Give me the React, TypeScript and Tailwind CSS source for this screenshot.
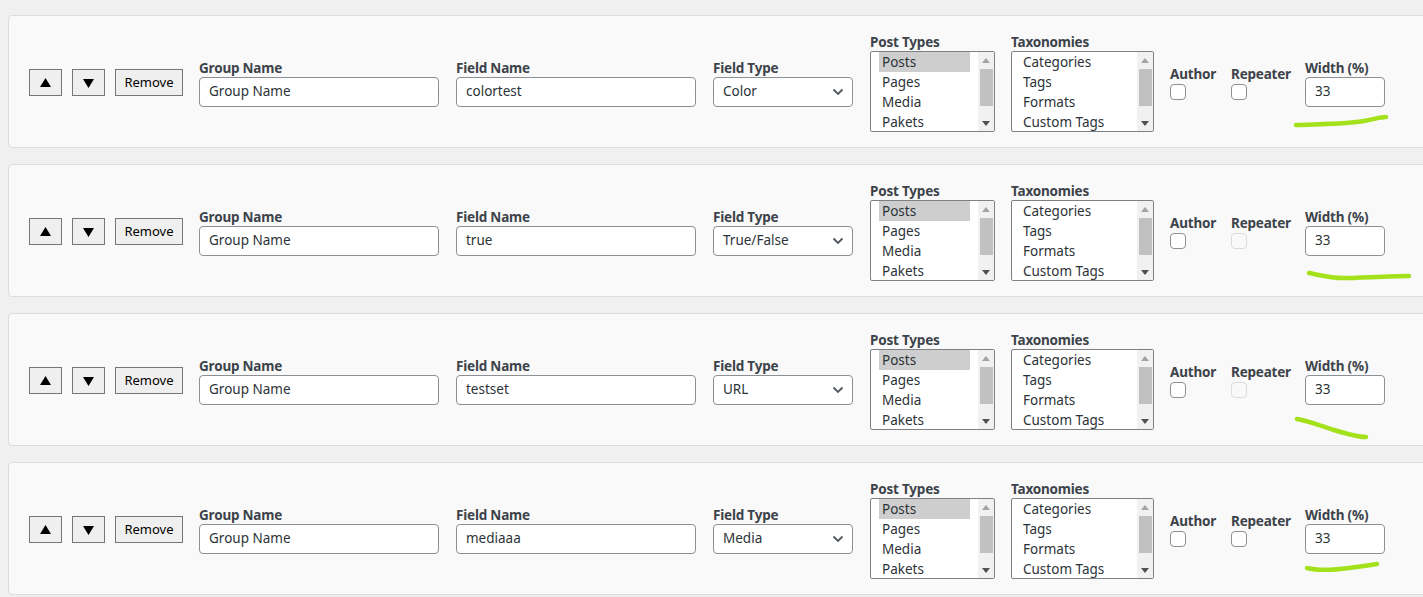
import React from 'react';

type Row = {
  fieldName: string;
  fieldType: string;
  repeaterDisabled: boolean;
  mark: string;
};

const rows: Row[] = [
  {
    fieldName: 'colortest',
    fieldType: 'Color',
    repeaterDisabled: false,
    mark: 'M1287 109 C 1315 108, 1340 108, 1355 105 S 1372 101 1377 101',
  },
  {
    fieldName: 'true',
    fieldType: 'True/False',
    repeaterDisabled: true,
    mark: 'M1300 108 C 1315 111, 1322 113, 1335 113 S 1380 111 1400 111',
  },
  {
    fieldName: 'testset',
    fieldType: 'URL',
    repeaterDisabled: true,
    mark: 'M1288 105 C 1300 107, 1312 112, 1325 116 S 1350 123 1357 123',
  },
  {
    fieldName: 'mediaaa',
    fieldType: 'Media',
    repeaterDisabled: false,
    mark: 'M1298 105 C 1310 108, 1325 107, 1340 105 S 1362 102 1368 101',
  },
];

const font = { fontFamily: '"Noto Sans", "Open Sans", Arial, sans-serif' };

function FieldLabel({ children }: { children: React.ReactNode }) {
  return (
    <div className="text-[13.5px] leading-[18px] font-bold tracking-[-0.2px] text-[#3c434a] whitespace-nowrap">
      {children}
    </div>
  );
}

function TextInput({ value, width }: { value: string; width: string }) {
  return (
    <div
      className={`${width} h-[30px] flex items-center px-[9px] bg-white border border-[#8c8f94] rounded-[4px] text-[13.5px] text-[#2c3338]`}
    >
      {value}
    </div>
  );
}

function ListBox({
  items,
  width,
  selected,
}: {
  items: string[];
  width: string;
  selected?: number;
}) {
  return (
    <div
      className={`${width} h-[81px] flex bg-white border border-[#7e8084] rounded-[2px] overflow-hidden`}
    >
      <div className="flex-1 pl-[8px] pr-[8px]">
        {items.map((item, i) => (
          <div
            key={item}
            className={`h-[20px] leading-[20px] pl-[3px] text-[13.5px] text-[#2c3338] whitespace-nowrap ${
              i === selected ? 'bg-[#cecece]' : ''
            }`}
          >
            {item}
          </div>
        ))}
      </div>
      <div className="w-[16px] bg-[#f1f1f1] flex flex-col items-center">
        <div className="h-[16px] flex items-center justify-center">
          <svg width="8" height="5" viewBox="0 0 8 5">
            <path d="M0 5 L4 0 L8 5 Z" fill="#a3a3a3" />
          </svg>
        </div>
        <div className="w-[13px] h-[37px] mt-[1px] bg-[#c1c1c1]" />
        <div className="flex-1" />
        <div className="h-[16px] flex items-center justify-center">
          <svg width="8" height="5" viewBox="0 0 8 5">
            <path d="M0 0 L4 5 L8 0 Z" fill="#505050" />
          </svg>
        </div>
      </div>
    </div>
  );
}

function CheckBox({ disabled }: { disabled?: boolean }) {
  return (
    <div
      className={`w-[16px] h-[16px] rounded-[4px] border ${
        disabled ? 'border-[#dcdcde] bg-[#f9f9f9]' : 'border-[#8c8f94] bg-white'
      }`}
    />
  );
}

function SmallButton({
  children,
  width,
}: {
  children: React.ReactNode;
  width: string;
}) {
  return (
    <div
      className={`${width} h-[27px] flex items-center justify-center bg-[#efefef] border border-[#767676] text-[13px] text-black`}
    >
      {children}
    </div>
  );
}

function Arrow({ down }: { down?: boolean }) {
  return (
    <svg width="11" height="10" viewBox="0 0 11 10">
      <path d={down ? 'M0 1 L11 1 L5.5 10 Z' : 'M0 9 L11 9 L5.5 0 Z'} fill="#000" />
    </svg>
  );
}

function FieldRow({ row }: { row: Row }) {
  return (
    <div className="relative w-[1440px] h-[133px] flex items-center pl-[20px] pt-[2px] bg-[#f9f9f9] border border-[#dcdcde] rounded-[4px]">
      <SmallButton width="w-[33px]">
        <Arrow />
      </SmallButton>
      <div className="ml-[10px]">
        <SmallButton width="w-[33px]">
          <Arrow down />
        </SmallButton>
      </div>
      <div className="ml-[10px]">
        <SmallButton width="w-[68px]">Remove</SmallButton>
      </div>

      <div className="ml-[16px] flex flex-col">
        <FieldLabel>Group Name</FieldLabel>
        <TextInput value="Group Name" width="w-[240px]" />
      </div>

      <div className="ml-[17px] flex flex-col">
        <FieldLabel>Field Name</FieldLabel>
        <TextInput value={row.fieldName} width="w-[240px]" />
      </div>

      <div className="ml-[17px] flex flex-col">
        <FieldLabel>Field Type</FieldLabel>
        <div className="w-[140px] h-[30px] flex items-center justify-between pl-[9px] pr-[8px] bg-white border border-[#8c8f94] rounded-[4px] text-[13.5px] text-[#2c3338]">
          <span>{row.fieldType}</span>
          <svg width="12" height="8" viewBox="0 0 12 8">
            <path
              d="M1.5 1.5 L6 6 L10.5 1.5"
              fill="none"
              stroke="#50575e"
              strokeWidth="1.8"
            />
          </svg>
        </div>
      </div>

      <div className="ml-[17px] flex flex-col">
        <FieldLabel>Post Types</FieldLabel>
        <ListBox
          items={['Posts', 'Pages', 'Media', 'Pakets']}
          width="w-[125px]"
          selected={0}
        />
      </div>

      <div className="ml-[16px] flex flex-col">
        <FieldLabel>Taxonomies</FieldLabel>
        <ListBox
          items={['Categories', 'Tags', 'Formats', 'Custom Tags']}
          width="w-[143px]"
        />
      </div>

      <div className="ml-[16px] w-[45px] flex flex-col">
        <FieldLabel>Author</FieldLabel>
        <div className="mt-[1px]">
          <CheckBox />
        </div>
      </div>

      <div className="ml-[16px] w-[58px] flex flex-col">
        <FieldLabel>Repeater</FieldLabel>
        <div className="mt-[1px]">
          <CheckBox disabled={row.repeaterDisabled} />
        </div>
      </div>

      <div className="ml-[16px] flex flex-col">
        <FieldLabel>Width (%)</FieldLabel>
        <TextInput value="33" width="w-[80px]" />
      </div>

      <svg
        className="absolute left-0 top-0 pointer-events-none"
        width="1440"
        height="133"
        viewBox="0 0 1440 133"
      >
        <path
          d={row.mark}
          fill="none"
          stroke="#a3e21a"
          strokeWidth="4.5"
          strokeLinecap="round"
        />
      </svg>
    </div>
  );
}

export default function App() {
  return (
    <div
      className="w-full min-h-[597px] overflow-hidden bg-[#f0f0f1] pt-[15px] pl-[8px]"
      style={font}
    >
      <div className="flex flex-col gap-[16px]">
        {rows.map((row, i) => (
          <FieldRow key={i} row={row} />
        ))}
      </div>
    </div>
  );
}
